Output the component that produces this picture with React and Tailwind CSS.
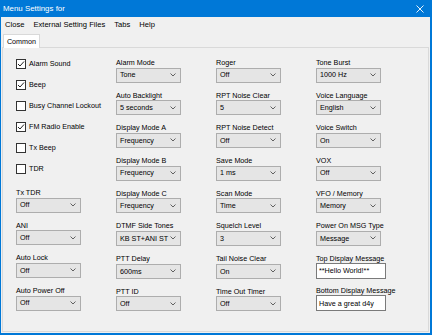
import React from "react";

const FONT = { fontFamily: '"Liberation Sans", Arial, sans-serif' };

function Chevron() {
  return (
    <svg width="6" height="4" viewBox="0 0 6 4" className="shrink-0">
      <path d="M0.5 0.5 L3 3 L5.5 0.5" fill="none" stroke="#606060" strokeWidth="1" />
    </svg>
  );
}

function Combo({ value }) {
  return (
    <div className="w-[65px] h-[15px] bg-[#e5e5e5] border border-[#adadad] flex items-center justify-between pl-[3px] pr-[4px]">
      <span className="text-[7.2px] leading-none text-black whitespace-nowrap">{value}</span>
      <Chevron />
    </div>
  );
}

function Field({ label, value }) {
  return (
    <div className="flex flex-col">
      <div className="h-[10px] flex items-center text-[7.2px] leading-none text-black whitespace-nowrap">{label}</div>
      <Combo value={value} />
    </div>
  );
}

function TextField({ label, value }) {
  return (
    <div className="flex flex-col">
      <div className="h-[9px] flex items-center text-[7.2px] leading-none text-black whitespace-nowrap">{label}</div>
      <div className="w-[70px] h-[16px] bg-white border border-[#7a7a7a] flex items-center pl-[2px]">
        <span className="text-[7.2px] leading-none text-black whitespace-nowrap">{value}</span>
      </div>
    </div>
  );
}

function Check({ label, checked }) {
  return (
    <div className="h-[21px] flex items-center">
      <div className="w-[10px] h-[10px] bg-white border border-[#333333] flex items-center justify-center">
        {checked && (
          <svg width="8" height="8" viewBox="0 0 8 8">
            <path d="M1 4 L3 6 L7 1.5" fill="none" stroke="#222" strokeWidth="1" />
          </svg>
        )}
      </div>
      <span className="ml-[3px] text-[7.2px] leading-none text-black whitespace-nowrap">{label}</span>
    </div>
  );
}

export default function App() {
  return (
    <div style={FONT} className="w-[432px] h-[335px] bg-[#0078d7] flex flex-col pl-[1px] pr-[2px] pb-[2px] overflow-hidden">
      <div className="h-[17px] shrink-0 flex items-center justify-between pl-[2px] pr-[6px]">
        <span className="text-[7.9px] leading-none text-white">Menu Settings for</span>
        <svg width="8" height="8" viewBox="0 0 8 8">
          <path d="M0.5 0.5 L7.5 7.5 M7.5 0.5 L0.5 7.5" stroke="white" strokeWidth="0.9" />
        </svg>
      </div>
      <div className="flex-1 bg-[#f0f0f0] flex flex-col">
        <div className="h-[15px] shrink-0 flex items-center pl-[4px] gap-[9px] text-[7.6px] leading-none text-black">
          <span>Close</span>
          <span>External Setting Files</span>
          <span>Tabs</span>
          <span>Help</span>
        </div>
        <div className="h-[15px] shrink-0 flex items-end pl-[2px]">
          <div className="h-[14px] w-[37px] bg-white border-t border-l border-r border-[#d9d9d9] flex items-center justify-center text-[7.2px] leading-none text-black -mb-[1px] relative">
            Common
          </div>
        </div>
        <div className="flex-1 mx-[1px] mb-[1px] border border-[#d9d9d9] bg-[#f0f0f0] pl-[13px] pt-[9.5px]">
          <div className="grid grid-cols-[100px_100px_100px_100px] items-start">
            <div className="flex flex-col -mt-[4px]">
              <Check label="Alarm Sound" checked />
              <Check label="Beep" checked />
              <Check label="Busy Channel Lockout" />
              <Check label="FM Radio Enable" checked />
              <Check label="Tx Beep" />
              <Check label="TDR" />
              <div className="flex flex-col gap-[7.7px] mt-[8px]">
                <Field label="Tx TDR" value="Off" />
                <Field label="ANI" value="Off" />
                <Field label="Auto Lock" value="Off" />
                <Field label="Auto Power Off" value="Off" />
              </div>
            </div>
            <div className="flex flex-col gap-[7.7px]">
              <Field label="Alarm Mode" value="Tone" />
              <Field label="Auto Backlight" value="5 seconds" />
              <Field label="Display Mode A" value="Frequency" />
              <Field label="Display Mode B" value="Frequency" />
              <Field label="Display Mode C" value="Frequency" />
              <Field label="DTMF Side Tones" value="KB ST+ANI ST" />
              <Field label="PTT Delay" value="600ms" />
              <Field label="PTT ID" value="Off" />
            </div>
            <div className="flex flex-col gap-[7.7px]">
              <Field label="Roger" value="Off" />
              <Field label="RPT Noise Clear" value="5" />
              <Field label="RPT Noise Detect" value="Off" />
              <Field label="Save Mode" value="1 ms" />
              <Field label="Scan Mode" value="Time" />
              <Field label="Squelch Level" value="3" />
              <Field label="Tail Noise Clear" value="On" />
              <Field label="Time Out Timer" value="Off" />
            </div>
            <div className="flex flex-col gap-[7.7px]">
              <Field label="Tone Burst" value="1000 Hz" />
              <Field label="Voice Language" value="English" />
              <Field label="Voice Switch" value="On" />
              <Field label="VOX" value="Off" />
              <Field label="VFO / Memory" value="Memory" />
              <Field label="Power On MSG Type" value="Message" />
              <TextField label="Top Display Message" value={'**Hello World!**'} />
              <TextField label="Bottom Display Message" value="Have a great d4y" />
            </div>
          </div>
        </div>
      </div>
    </div>
  );
}
